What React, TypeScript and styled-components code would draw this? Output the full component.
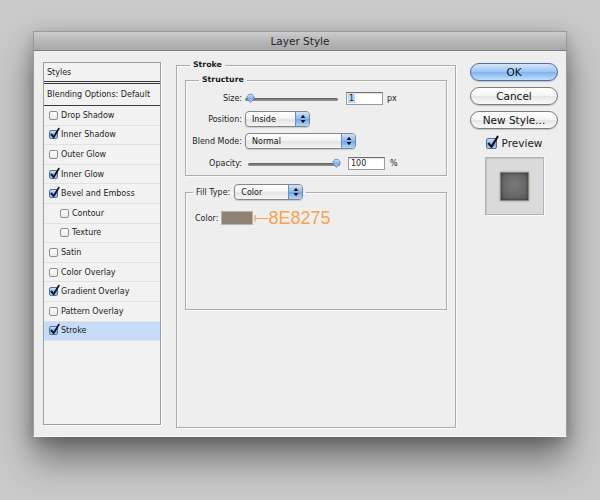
import styled, { createGlobalStyle } from "styled-components";

const GlobalStyle = createGlobalStyle`
  html, body {
    margin: 0;
    padding: 0;
    background: #c9c9c9;
  }
  body {
    width: 600px;
    height: 500px;
    overflow: hidden;
    font-family: "DejaVu Sans", "Liberation Sans", sans-serif;
    color: #1c1c1c;
  }
`;

const Page = styled.div`
  width: 600px;
  height: 500px;
  box-sizing: border-box;
  padding: 31px 0 0 33px;
`;

const Window = styled.div`
  width: 534px;
  height: 406px;
  display: flex;
  flex-direction: column;
  background: #ededed;
  box-sizing: border-box;
  border: 1px solid #9a9a9a;
  border-bottom-color: #fafafa;
  box-shadow: 0 22px 34px rgba(0, 0, 0, 0.45), 0 4px 14px rgba(0, 0, 0, 0.22);
`;

const TitleBar = styled.div`
  height: 18px;
  display: flex;
  align-items: center;
  justify-content: center;
  background: linear-gradient(#cdcdcd, #b9b9b9 45%, #a9a9a9);
  border-bottom: 1px solid #7c7c7c;
  font-size: 10.5px;
  color: #262626;
`;

const Body = styled.div`
  flex: 1;
  display: flex;
  padding: 11px 8px 11px 9px;
  background: #eeeeee;
`;

/* ---------- left list ---------- */

const StylesPanel = styled.div`
  width: 118px;
  box-sizing: border-box;
  border: 1px solid #9c9c9c;
  box-shadow: 1px 1px 0 #fbfbfb;
  background: #f2f2f2;
  font-size: 8px;
`;

const PanelHeader = styled.div`
  height: 18px;
  display: flex;
  align-items: center;
  padding-left: 3px;
  border-bottom: 3px double #3a3a3a;
`;

const BlendRow = styled.div`
  height: 21px;
  display: flex;
  align-items: center;
  padding-left: 3px;
  border-bottom: 1px solid #3a3a3a;
`;

const StyleRow = styled.div<{ $indent?: boolean; $active?: boolean }>`
  height: 19.6px;
  box-sizing: border-box;
  display: flex;
  align-items: center;
  gap: 3px;
  padding-left: ${(p) => (p.$indent ? "16px" : "5px")};
  border-bottom: 1px solid #e1e1e1;
  background: ${(p) => (p.$active ? "#c6dbf7" : "transparent")};
`;

const CheckBox = styled.span<{ $checked?: boolean; $size: number }>`
  position: relative;
  display: inline-block;
  flex: none;
  width: ${(p) => p.$size}px;
  height: ${(p) => p.$size}px;
  box-sizing: border-box;
  border-radius: 2px;
  border: 1px solid ${(p) => (p.$checked ? "#4b6fa6" : "#8e8e8e")};
  background: ${(p) =>
    p.$checked
      ? "linear-gradient(#cfe3fb, #86b6ee 50%, #6aa3e8 51%, #b4d6f8)"
      : "linear-gradient(#ffffff, #ebebeb)"};

  svg {
    position: absolute;
    left: 0;
    top: -3px;
    overflow: visible;
  }
`;

function Check({ checked, size = 9 }: { checked?: boolean; size?: number }) {
  return (
    <CheckBox $checked={checked} $size={size}>
      {checked && (
        <svg width={size} height={size + 2} viewBox="0 0 9 11">
          <path
            d="M1.4 6.4 L3.6 9.2 L8.8 0.6"
            fill="none"
            stroke="#111"
            strokeWidth="1.8"
            strokeLinecap="round"
            strokeLinejoin="round"
          />
        </svg>
      )}
    </CheckBox>
  );
}

const styleItems = [
  { label: "Drop Shadow", checked: false },
  { label: "Inner Shadow", checked: true },
  { label: "Outer Glow", checked: false },
  { label: "Inner Glow", checked: true },
  { label: "Bevel and Emboss", checked: true },
  { label: "Contour", checked: false, indent: true },
  { label: "Texture", checked: false, indent: true },
  { label: "Satin", checked: false },
  { label: "Color Overlay", checked: false },
  { label: "Gradient Overlay", checked: true },
  { label: "Pattern Overlay", checked: false },
  { label: "Stroke", checked: true, active: true },
];

/* ---------- middle ---------- */

const Group = styled.fieldset<{ $top?: number }>`
  margin: ${(p) => p.$top ?? 0}px 0 0 0;
  padding: 0;
  min-inline-size: 0;
  border: 1px solid #ababab;
  box-shadow: inset 1px 1px 0 #fbfbfb, 1px 1px 0 #fbfbfb;
  display: flex;
  flex-direction: column;
`;

const StrokeGroup = styled(Group)`
  width: 280px;
  box-sizing: border-box;
  margin: -2px 0 -3px 15px;
  padding: 0 8px;
`;

const Legend = styled.legend<{ $inset?: number }>`
  margin-left: ${(p) => p.$inset ?? 13}px;
  padding: 0 3px;
  font-size: 7.8px;
  font-weight: bold;
  line-height: 10px;
  color: #1a1a1a;
`;

const FillLegend = styled.legend`
  margin-left: 7px;
  padding: 0 3px;
  display: flex;
  align-items: center;
  gap: 4px;
  font-size: 8px;
`;

const FormGrid = styled.div`
  display: grid;
  grid-template-columns: 56px 1fr;
  grid-template-rows: 20px 22px 22px 22px;
  column-gap: 3px;
  align-items: center;
  padding: 3px 0 1px 0;
  font-size: 8px;
`;

const FieldLabel = styled.span`
  text-align: right;
`;

const Control = styled.div<{ $shift?: number }>`
  display: flex;
  align-items: center;
  padding-left: ${(p) => p.$shift ?? 0}px;
`;

const SliderTrack = styled.div<{ $width: number }>`
  position: relative;
  width: ${(p) => p.$width}px;
  height: 10px;
  margin-right: 8px;

  &::before {
    content: "";
    position: absolute;
    left: 0;
    right: 0;
    top: 5px;
    height: 3px;
    border-radius: 2px;
    background: linear-gradient(#5e5e5e, #9a9a9a);
  }
`;

const Thumb = styled.svg<{ $end?: boolean }>`
  position: absolute;
  top: 0;
  ${(p) => (p.$end ? "right: -1px;" : "left: 1px;")}
`;

function Slider({ width, end }: { width: number; end?: boolean }) {
  return (
    <SliderTrack $width={width}>
      <Thumb $end={end} width="9" height="10" viewBox="0 0 9 10">
        <defs>
          <linearGradient id={end ? "tg2" : "tg1"} x1="0" y1="0" x2="0" y2="1">
            <stop offset="0" stopColor="#d4e6fb" />
            <stop offset="0.55" stopColor="#7fb1ec" />
            <stop offset="1" stopColor="#a9cdf6" />
          </linearGradient>
        </defs>
        <path
          d="M4.5 9.3 L1.2 6.3 A3.6 3.6 0 1 1 7.8 6.3 Z"
          fill={`url(#${end ? "tg2" : "tg1"})`}
          stroke="#5478ad"
          strokeWidth="0.8"
        />
      </Thumb>
    </SliderTrack>
  );
}

const NumberBox = styled.span<{ $selected?: boolean }>`
  width: 37px;
  height: 13px;
  box-sizing: border-box;
  display: inline-flex;
  align-items: center;
  padding-left: 1px;
  background: #fff;
  border: 1px solid #9a9a9a;
  border-top-color: #6f6f6f;
  box-shadow: inset 0 1px 1px rgba(0, 0, 0, 0.12);
  font-size: 8px;

  span {
    padding: 0 1px;
    background: ${(p) => (p.$selected ? "#b6d4fb" : "transparent")};
  }
`;

const Unit = styled.span<{ $gap: number }>`
  margin-left: ${(p) => p.$gap}px;
  font-size: 8px;
`;

const PopupBox = styled.div<{ $width: number }>`
  width: ${(p) => p.$width}px;
  height: 16px;
  box-sizing: border-box;
  display: flex;
  align-items: stretch;
  border: 1px solid #858585;
  border-radius: 4px;
  overflow: hidden;
  background: linear-gradient(#ffffff, #f4f4f4 45%, #e4e4e4 55%, #f6f6f6);
  box-shadow: 0 1px 1px rgba(0, 0, 0, 0.15);
  font-size: 8px;
  font-weight: normal;
`;

const PopupText = styled.span`
  flex: 1;
  display: flex;
  align-items: center;
  padding-left: 6px;
  color: #111;
`;

const PopupCap = styled.span`
  width: 13px;
  display: flex;
  align-items: center;
  justify-content: center;
  border-left: 1px solid #6f8fbf;
  background: linear-gradient(#cfe3fb, #8cbbef 48%, #6ea6ea 52%, #b5d7f9);
`;

function Popup({ value, width }: { value: string; width: number }) {
  return (
    <PopupBox $width={width}>
      <PopupText>{value}</PopupText>
      <PopupCap>
        <svg width="6" height="10" viewBox="0 0 6 10">
          <path d="M3 0.8 L5.4 4 L0.6 4 Z" fill="#111" />
          <path d="M3 9.2 L5.4 6 L0.6 6 Z" fill="#111" />
        </svg>
      </PopupCap>
    </PopupBox>
  );
}

const FillBody = styled.div`
  height: 109px;
  box-sizing: border-box;
  padding: 11px 0 0 9px;
  font-size: 8px;
`;

const ColorRow = styled.div`
  display: flex;
  align-items: center;
  height: 14px;
`;

const Swatch = styled.span<{ $color: string }>`
  width: 32px;
  height: 14px;
  box-sizing: border-box;
  margin-left: 3px;
  background: ${(p) => p.$color};
  border: 1px solid #b9b4ae;
`;

const HexNote = styled.span`
  display: flex;
  align-items: center;
  margin-left: 1px;
  font-family: "Liberation Sans", Arial, sans-serif;
  font-size: 18px;
  line-height: 18px;
  color: #f8a34c;
`;

/* ---------- right column ---------- */

const Actions = styled.div`
  width: 88px;
  margin-left: 14px;
  margin-top: 1px;
  display: flex;
  flex-direction: column;
  align-items: center;
`;

const PillButton = styled.div<{ $primary?: boolean }>`
  width: 88px;
  height: 18px;
  box-sizing: border-box;
  margin-bottom: 6px;
  display: flex;
  align-items: center;
  justify-content: center;
  border-radius: 9px;
  border: 1px solid ${(p) => (p.$primary ? "#4f6fa4" : "#7d7d7d")};
  background: ${(p) =>
    p.$primary
      ? "linear-gradient(#d3e6fb, #9cc6f2 48%, #7db4ee 52%, #c2e0fb)"
      : "linear-gradient(#ffffff, #f5f5f5 48%, #e6e6e6 52%, #fafafa)"};
  box-shadow: 0 1px 1px rgba(0, 0, 0, 0.2);
  font-size: 10.5px;
  color: #111;
`;

const PreviewToggle = styled.div`
  margin-top: 2px;
  display: flex;
  align-items: center;
  gap: 5px;
  font-size: 10.5px;
`;

const PreviewFrame = styled.div`
  margin-top: 8px;
  width: 59px;
  height: 58px;
  box-sizing: border-box;
  display: flex;
  align-items: center;
  justify-content: center;
  background: #dadada;
  border: 1px solid #b3b3b3;
  box-shadow: inset 1px 1px 0 #c4c4c4, 1px 1px 0 #fafafa;
`;

const PreviewSquare = styled.div`
  width: 29px;
  height: 29px;
  box-sizing: border-box;
  border: 1px solid #8e8275;
  background: radial-gradient(circle at 50% 45%, #7a7a7a, #666 60%, #555);
  box-shadow: inset 0 0 3px rgba(0, 0, 0, 0.55), 0 0 2px rgba(0, 0, 0, 0.3);
`;

export default function App() {
  return (
    <>
      <GlobalStyle />
      <Page>
        <Window>
          <TitleBar>Layer Style</TitleBar>
          <Body>
            <StylesPanel>
              <PanelHeader>Styles</PanelHeader>
              <BlendRow>Blending Options: Default</BlendRow>
              {styleItems.map((item) => (
                <StyleRow key={item.label} $indent={item.indent} $active={item.active}>
                  <Check checked={item.checked} />
                  <span>{item.label}</span>
                </StyleRow>
              ))}
            </StylesPanel>

            <StrokeGroup>
              <Legend $inset={5}>Stroke</Legend>
              <Group $top={5}>
                <Legend>Structure</Legend>
                <FormGrid>
                  <FieldLabel>Size:</FieldLabel>
                  <Control>
                    <Slider width={93} />
                    <NumberBox $selected>
                      <span>1</span>
                    </NumberBox>
                    <Unit $gap={4}>px</Unit>
                  </Control>
                  <FieldLabel>Position:</FieldLabel>
                  <Control>
                    <Popup value="Inside" width={65} />
                  </Control>
                  <FieldLabel>Blend Mode:</FieldLabel>
                  <Control>
                    <Popup value="Normal" width={111} />
                  </Control>
                  <FieldLabel>Opacity:</FieldLabel>
                  <Control $shift={3}>
                    <Slider width={92} end />
                    <NumberBox>
                      <span>100</span>
                    </NumberBox>
                    <Unit $gap={5}>%</Unit>
                  </Control>
                </FormGrid>
              </Group>
              <Group $top={8}>
                <FillLegend>
                  <span>Fill Type:</span>
                  <Popup value="Color" width={69} />
                </FillLegend>
                <FillBody>
                  <ColorRow>
                    <span>Color:</span>
                    <Swatch $color="#8E8275" />
                    <HexNote>
                      <svg width="14" height="9" viewBox="0 0 14 9">
                        <path d="M1 1 V8 M1 4.5 H14" stroke="#f8a34c" strokeWidth="1.2" fill="none" />
                      </svg>
                      8E8275
                    </HexNote>
                  </ColorRow>
                </FillBody>
              </Group>
            </StrokeGroup>

            <Actions>
              <PillButton $primary>OK</PillButton>
              <PillButton>Cancel</PillButton>
              <PillButton>New Style...</PillButton>
              <PreviewToggle>
                <Check checked size={11} />
                <span>Preview</span>
              </PreviewToggle>
              <PreviewFrame>
                <PreviewSquare />
              </PreviewFrame>
            </Actions>
          </Body>
        </Window>
      </Page>
    </>
  );
}
